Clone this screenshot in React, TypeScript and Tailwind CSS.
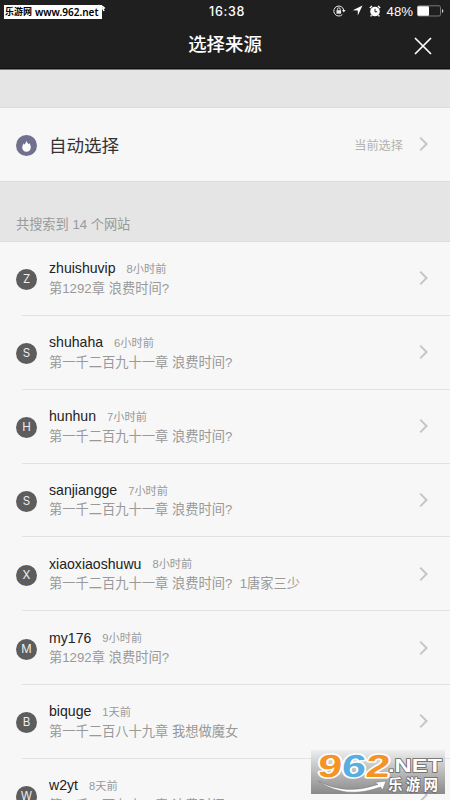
import clsx from "clsx";

const sources = [
  { name: "zhuishuvip", time: "8小时前", chapter: "第1292章 浪费时间?" },
  { name: "shuhaha", time: "6小时前", chapter: "第一千二百九十一章 浪费时间?" },
  { name: "hunhun", time: "7小时前", chapter: "第一千二百九十一章 浪费时间?" },
  { name: "sanjiangge", time: "7小时前", chapter: "第一千二百九十一章 浪费时间?" },
  { name: "xiaoxiaoshuwu", time: "8小时前", chapter: "第一千二百九十一章 浪费时间?  1唐家三少" },
  { name: "my176", time: "9小时前", chapter: "第1292章 浪费时间?" },
  { name: "biquge", time: "1天前", chapter: "第一千二百八十九章 我想做魔女" },
  { name: "w2yt", time: "8天前", chapter: "第一千二百九十一章 浪费时间?" },
];

const Chevron = ({ className }: { className?: string }) => (
  <svg className={clsx("shrink-0", className)} width="10" height="16" viewBox="0 0 10 16" fill="none">
    <path d="M1.2 1.6 7.6 8 1.2 14.4" stroke="#c4c4c7" strokeWidth="1.9" />
  </svg>
);

const StatusBar = () => (
  <div className="flex h-[22px] items-center pl-1 pr-[6px]">
    <div className="relative w-[200px]">
      <svg className="absolute left-[92px] top-0" width="10" height="8" viewBox="0 0 10 8" fill="none">
        <path d="M2 1.500Q6 1.500 8.800 4.500M6.500 4 8 7" stroke="#fff" strokeWidth="1.6" />
      </svg>
      <div className="relative top-[1px] flex h-[14px] w-[98px] items-center whitespace-nowrap bg-white pl-[1px] font-['Noto_Sans','Noto_Sans_CJK_SC',sans-serif] text-[9px] font-bold text-black">
        <span>乐游网</span>
        <span className="ml-[3px] text-[10px] font-semibold">www.962.net</span>
      </div>
    </div>
    <span className="ml-[5px] pt-[2px] font-['Inter',sans-serif] text-[12.5px] font-medium leading-none tracking-[0.7px]">16:38</span>
    <div className="ml-auto flex items-center">
      <svg width="13" height="12" viewBox="0 0 13 12" fill="none">
        <path d="M9.3 9.6A5 5 0 1 1 10.7 5" stroke="#e8e8e8" strokeWidth="1" />
        <path d="m9 5.1 3.6 0-1.8 2.3z" fill="#e8e8e8" />
        <path d="M3.5 5.2h4.6v3.5H3.5z" fill="#e8e8e8" />
        <path d="M4.4 5.5V4.2a1.4 1.4 0 0 1 2.8 0v1.3" stroke="#e8e8e8" strokeWidth=".9" />
      </svg>
      <svg className="ml-[6px]" width="11" height="11" viewBox="0 0 11 11">
        <path d="M10.5.5 5.8 10.5V5.6L.8 5.3z" fill="#fff" />
      </svg>
      <svg className="ml-[6px]" width="12" height="12" viewBox="0 0 12 12" fill="none">
        <circle cx="6" cy="6.5" r="4.8" fill="#fff" />
        <path d="M.8 3 3 1M11.2 3 9 1M2.6 10.2 1.6 11.4M9.4 10.2l1 1.2" stroke="#fff" strokeWidth="1.4" />
        <path d="M6 3.8v3h2.2" stroke="#222" strokeWidth="1" />
      </svg>
      <span className="ml-[6px] pt-[2px] font-['Liberation_Sans',sans-serif] text-[13.2px] leading-none">48%</span>
      <svg className="ml-[3px]" width="28" height="12" viewBox="0 0 28 12" fill="none">
        <rect x="1.5" y=".8" width="23" height="10.2" rx="1.5" stroke="#777" />
        <rect x="1.5" y="1.2" width="11.5" height="9.5" rx="1" fill="#fff" />
        <path d="M26 4.2q1.3.3 1.3 1.7T26 7.7z" fill="#ddd" />
      </svg>
    </div>
  </div>
);

const Header = () => (
  <header className="h-[70px] shrink-0 border-b border-[#777] bg-[#1f1f1f] text-white shadow-[inset_0_-1px_0_#111]">
    <StatusBar />
    <div className="grid h-[46px] grid-cols-[1fr_auto_1fr] items-center">
      <h1 className="col-start-2 text-[18.4px] font-medium leading-none">选择来源</h1>
      <svg className="mr-[18px] mt-[2px] justify-self-end" width="18" height="18" viewBox="0 0 18 18" fill="none">
        <path d="m1 1 16 16M17 1 1 17" stroke="#fff" strokeWidth="1.7" />
      </svg>
    </div>
  </header>
);

const SiteBadge = () => (
  <div className="absolute left-[311px] top-[750px] h-[44px] w-[134px] bg-linear-to-b from-[#eeeeee] to-[#8a8a8a]">
    <svg width="134" height="44" viewBox="0 0 134 44">
      <g transform="translate(0 27) skewX(-6)" fontFamily="Liberation Sans, sans-serif" fontWeight="bold" fontSize="32" stroke="#fff" strokeWidth="3" paintOrder="stroke" strokeLinejoin="round">
        <text x="6" y="0" textLength="24" lengthAdjust="spacingAndGlyphs" fill="#f49326">9</text>
        <text x="30" y="0" textLength="24" lengthAdjust="spacingAndGlyphs" fill="#58aee0">6</text>
        <text x="54" y="0" textLength="24" lengthAdjust="spacingAndGlyphs" fill="#f49326">2</text>
      </g>
      <g fill="#fff" stroke="#666" strokeWidth="1.4" paintOrder="stroke" fontWeight="bold">
        <text x="77" y="22" textLength="54" lengthAdjust="spacingAndGlyphs" fontFamily="Liberation Sans, sans-serif" fontSize="18.5">.NET</text>
        <text x="77" y="40" textLength="50" fontFamily="Noto Sans CJK SC, sans-serif" fontSize="14.5">乐游网</text>
      </g>
      <path d="M7 31Q34 46 67 34.5L63.5 32.5 75 31 71.5 40 69.5 37Q34 50 7 31z" fill="#fff" stroke="#777" strokeWidth=".5" />
    </svg>
  </div>
);

const App = () => {
  return (
    <main className="relative flex h-[800px] w-[450px] flex-col overflow-hidden bg-[#e5e5e5] font-['Liberation_Sans','Noto_Sans_CJK_SC',sans-serif]">
      <Header />

      <section className="mt-[37px] flex h-[75px] shrink-0 items-center border-y border-[#dcdcdc] bg-[#f7f7f7] pl-4 pr-5">
        <div className="mt-[2px] flex size-[21px] items-center justify-center rounded-full bg-[#70708f]">
          <svg width="9" height="12" viewBox="0 0 9 12">
            <path d="M4.2.3c.2 2 1.6 2.2 2.2 4 .4-.3.5-.7.6-1.2C8.2 4.3 8.8 6 8.8 7.5c0 2.5-1.9 4.2-4.3 4.2S.2 10 .2 7.5C.2 5.7 1.2 4.5 1.8 3.3c.3.5.4 1 .5 1.5C3.5 3.6 4.3 2.2 4.2.3z" fill="#fff" />
          </svg>
        </div>
        <span className="ml-3 mt-[4px] text-[17.5px] leading-none text-[#333]">自动选择</span>
        <span className="ml-auto mr-4 mt-[3px] text-[12.2px] leading-none text-[#b2b2b2]">当前选择</span>
        <Chevron className="-mt-px mr-[1px]" />
      </section>

      <div className="flex h-[59px] shrink-0 items-end pb-2 pl-4 text-[13.2px] leading-4 text-[#999]">
        共搜索到 14 个网站
      </div>

      <ul className="border-t border-[#dcdcdc] bg-[#f7f7f7]">
        {sources.map((item) => (
          <li key={item.name} className="pl-[22px]">
            <div className="flex h-[73.85px] items-center border-b border-[#e2e2e2] pr-[21px]">
              <div className="-ml-[6px] mt-[3px] flex size-[21px] shrink-0 items-center justify-center rounded-full bg-[#5d5d5d] font-['Inter',sans-serif] text-[11.5px] text-[#eee]">
                {item.name[0].toUpperCase()}
              </div>
              <div className="ml-3 mt-[1px] grow">
                <div className="flex h-5 items-center">
                  <span className="text-[14.1px] text-[#222]">{item.name}</span>
                  <span className="ml-[11px] mt-[1px] text-[11.2px] text-[#999]">{item.time}</span>
                </div>
                <p className="h-5 whitespace-pre text-[13.25px] leading-[19px] text-[#999]">{item.chapter}</p>
              </div>
              <Chevron />
            </div>
          </li>
        ))}
      </ul>

      <SiteBadge />
    </main>
  );
};

export default App;
